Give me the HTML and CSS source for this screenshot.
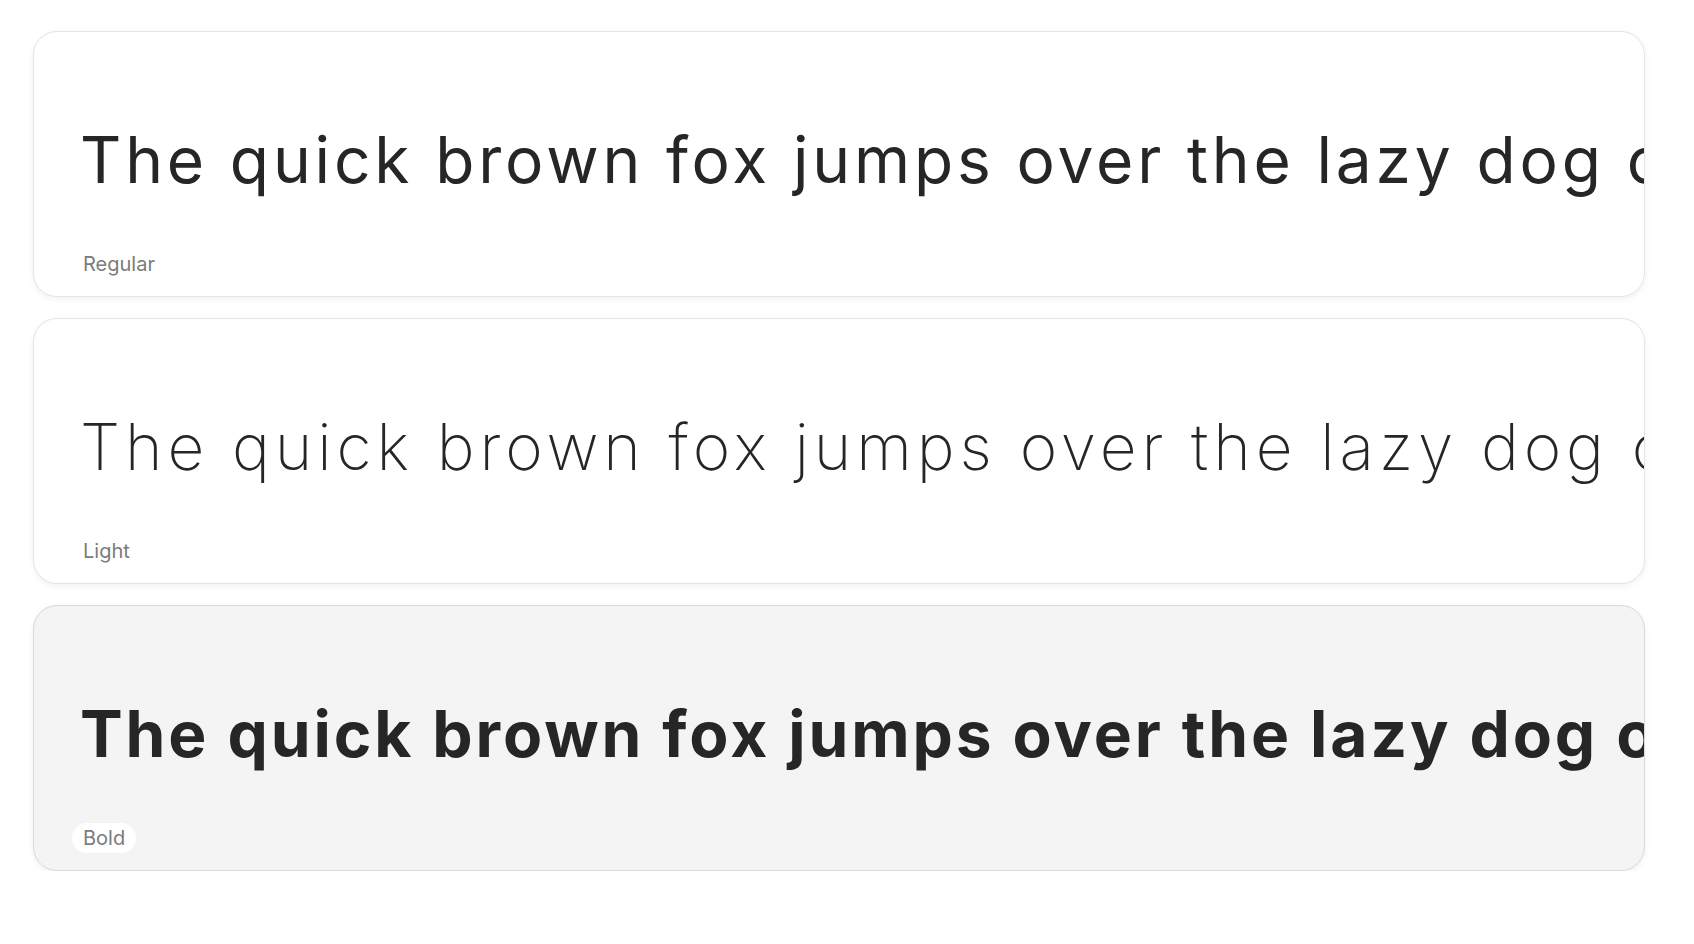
FILE: index.html
```html
<!DOCTYPE html>
<html lang="en">
<head>
<meta charset="utf-8">
<title>Font weights</title>
<link rel="stylesheet" href="styles.css">
</head>
<body>
<main class="list">
  <section class="card">
    <p class="sample sample-regular">The quick brown fox jumps over the lazy dog once more again</p>
    <span class="label">Regular</span>
  </section>
  <section class="card">
    <p class="sample sample-light">The quick brown fox jumps over the lazy dog once more again</p>
    <span class="label">Light</span>
  </section>
  <section class="card card-active">
    <p class="sample sample-bold">The quick brown fox jumps over the lazy dog once more again</p>
    <span class="label">Bold</span>
  </section>
</main>
</body>
</html>
```
FILE: styles.css
```css
* { box-sizing: border-box; }
html, body { margin: 0; background: #ffffff; }
body { font-family: Inter, "Noto Sans", sans-serif; }

.list {
  display: flex;
  flex-direction: column;
  gap: 21px;
  padding: 31px 0 0 33px;
  width: 1645px;
}

.card {
  height: 266px;
  display: flex;
  flex-direction: column;
  align-items: flex-start;
  background: #ffffff;
  border: 1px solid #e4e4e4;
  border-radius: 24px;
  box-shadow: 0 2px 6px rgba(0, 0, 0, 0.06);
  overflow: hidden;
  padding: 0 0 17px 38px;
}

.card-active {
  background: #f4f4f4;
  border-color: #dadada;
}

.sample {
  margin: 88px 0 0 8px;
  font-size: 64px;
  line-height: 80px;
  color: #262626;
  white-space: nowrap;
}

.sample-regular { font-weight: 400; letter-spacing: 3.85px; }
.sample-light { font-weight: 200; letter-spacing: 4.9px; }
.sample-bold { font-weight: 700; letter-spacing: 2.9px; }

.label {
  margin-top: auto;
  padding: 4px 11px;
  border-radius: 16px;
  background: #ffffff;
  font-size: 20px;
  line-height: 22px;
  color: #7b7b7b;
}
```
